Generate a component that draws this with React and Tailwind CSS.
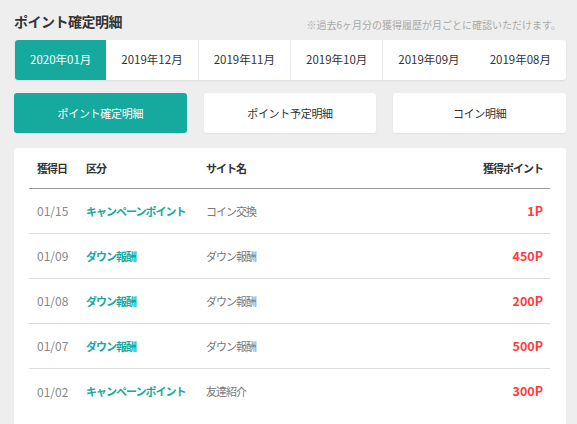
const months = ["2020年01月", "2019年12月", "2019年11月", "2019年10月", "2019年09月", "2019年08月"];

const kinds = ["ポイント確定明細", "ポイント予定明細", "コイン明細"];

const rows = [
  { date: "01/15", kind: "キャンペーンポイント", site: "コイン交換", pt: "1P" },
  { date: "01/09", kind: "ダウン報酬", site: "ダウン報酬", pt: "450P" },
  { date: "01/08", kind: "ダウン報酬", site: "ダウン報酬", pt: "200P" },
  { date: "01/07", kind: "ダウン報酬", site: "ダウン報酬", pt: "500P" },
  { date: "01/02", kind: "キャンペーンポイント", site: "友達紹介", pt: "300P" },
];

const cols = "grid grid-cols-[49px_120px_1fr_auto] items-center";

export default function App() {
  return (
    <div className="min-h-screen bg-[#eeeeee] pb-4 pl-[14px] pr-[11px] pt-[11px] font-['Noto_Sans_CJK_JP','Noto_Sans',sans-serif] text-[#333]">
      {/* Title */}
      <div className="flex items-end justify-between pr-[5px]">
        <h1 className="text-[14px] font-bold leading-[20px] tracking-[-0.5px]">ポイント確定明細</h1>
        <p className="text-[10px] leading-[13px] text-[#aaa]">※過去6ヶ月分の獲得履歴が月ごとに確認いただけます。</p>
      </div>

      {/* Month tabs */}
      <div className="mt-[9px] ml-px flex h-[40px] overflow-hidden rounded-[3px] bg-white shadow-[0_1px_2px_rgba(0,0,0,0.08)]">
        {months.map((m, i) => (
          <button
            key={m}
            className={`flex-1 text-[11.5px] ${
              i === 0
                ? "bg-[#16a99e] text-white"
                : i < 4
                ? "border-r border-[#eaeaea] text-[#333]"
                : "text-[#333]"
            }`}
          >
            {m}
          </button>
        ))}
      </div>

      {/* Type buttons */}
      <div className="mt-[13px] grid grid-cols-3 gap-[17px]">
        {kinds.map((k, i) => (
          <button
            key={k}
            className={`h-[40px] rounded-[3px] text-[11px] tracking-[-0.3px] ${
              i === 0 ? "bg-[#16a99e] text-white" : "bg-white text-[#333] shadow-[0_1px_2px_rgba(0,0,0,0.06)]"
            }`}
          >
            {k}
          </button>
        ))}
      </div>

      {/* List */}
      <div className="mt-[15px] rounded-[3px] bg-white pb-3 pl-[15px] pr-[16px]">
        <div className={`${cols} h-[41px] border-b border-[#999] text-[11px] font-bold tracking-[-1px] text-[#333]`}>
          <span className="pl-[8px]">獲得日</span>
          <span className="pl-[8px]">区分</span>
          <span className="pl-[8px]">サイト名</span>
          <span className="pr-[7px] text-right">獲得ポイント</span>
        </div>
        {rows.map((r, i) => (
          <div
            key={r.date}
            className={`${cols} h-[45px] ${i < rows.length - 1 ? "border-b border-[#dddddd]" : ""}`}
          >
            <span className="pl-[8px] text-[12px] text-[#888]">{r.date}</span>
            <span className="whitespace-nowrap pl-[8px] text-[11px] font-bold tracking-[-1px] text-[#16a99e]">{r.kind}</span>
            <span className="pl-[8px] text-[11px] tracking-[-1px] text-[#777]">{r.site}</span>
            <span className="pr-[7px] text-right text-[12.5px] font-bold text-[#ff3b3b]">{r.pt}</span>
          </div>
        ))}
      </div>
    </div>
  );
}
